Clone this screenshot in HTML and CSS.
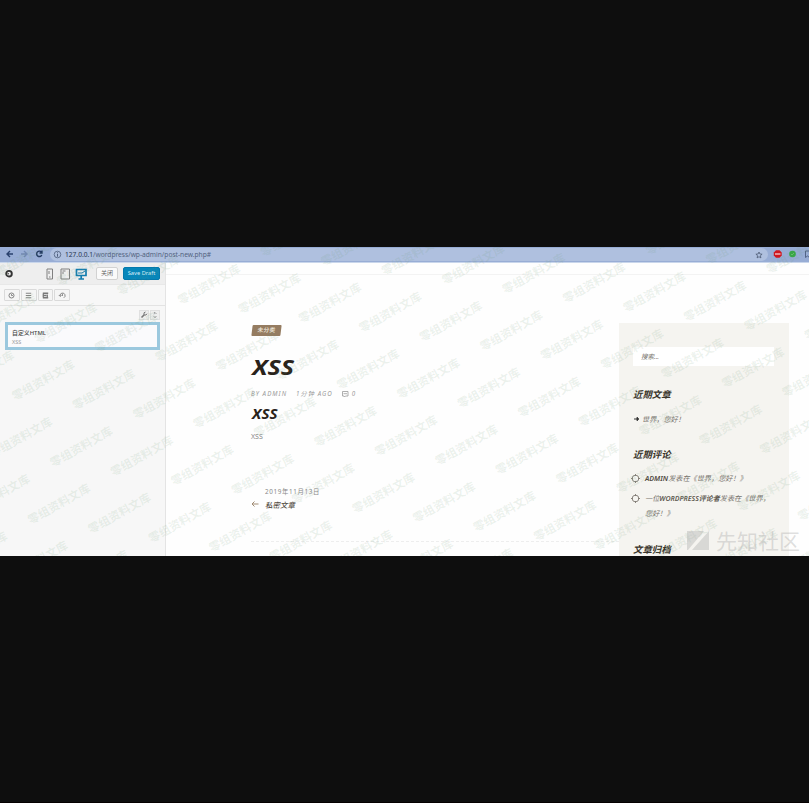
FILE: index.html
```html
<!DOCTYPE html>
<html lang="zh-CN">
<head>
<meta charset="utf-8">
<title>XSS</title>
<link rel="stylesheet" href="styles.css">
</head>
<body>
<div class="screen">
  <header class="browser">
    <svg class="nav" width="46" height="15" viewBox="0 0 46 15" fill="none" stroke-width="1.4">
      <path d="M13 7H7M10 4 7 7l3 3" stroke="#29406c"/>
      <path d="M21 7h6M24 4l3 3-3 3" stroke="#7188b3"/>
      <path d="M41.5 5.2A2.7 2.7 0 1 0 41.8 8M42 3.6V6h-2.5" stroke="#223961"/>
    </svg>
    <div class="address">
      <svg width="9" height="9" viewBox="0 0 9 9" fill="none" stroke="#4f5f7d"><circle cx="4.5" cy="4.5" r="3.3" stroke-width=".8"/><path d="M4.5 4v2.7M4.5 2.3v1"/></svg>
      <span class="url"><b>127.0.0.1</b>/wordpress/wp-admin/post-new.php#</span>
      <svg class="star" width="8" height="8" viewBox="0 0 8 8" fill="none" stroke="#4c5a74" stroke-width=".8"><path d="m4 1 .9 2 2.2.2-1.7 1.5.5 2.2L4 5.7 2.1 6.9l.5-2.2L.9 3.2 3.1 3z"/></svg>
    </div>
    <svg class="ext" width="41" height="15" viewBox="0 0 41 15">
      <path d="M8 3.2h3.5L13.7 5.400v3.200L11.500 10.800H8L5.800 8.600V5.400z" fill="#cf1820"/><path d="M7 7h5.500" stroke="#f6cdd0" stroke-width="1.300"/>
      <circle cx="24.500" cy="7" r="3.300" fill="#36a844"/><path d="m23 7 1 1 2-2" fill="none" stroke="#72c778" stroke-width=".8"/>
      <path d="M42 4h-4.500v6.500l2-1.500 2 1.500" fill="none" stroke="#526486"/>
    </svg>
  </header>
  <div class="workspace">
    <aside class="sidebar">
      <div class="actions">
        <svg width="9" height="9" viewBox="0 0 9 9"><circle cx="5" cy="4.700" r="2.800" fill="none" stroke="#333" stroke-width="1.900"/><path d="M5 2v2L3 4.700l2 .8" fill="#333"/></svg>
        <svg class="devices" width="44" height="14" viewBox="0 0 44 14" fill="none">
          <path d="M3 2h5.500v10H3zM5 10h1.500M5 4v3" stroke="#808080"/>
          <path d="M17 2h8.500v10H17zM18.500 4h3M19 5v2" stroke="#808080"/>
          <path d="M32.500 2.500h9.500v6h-9.500z" stroke="#127caf" stroke-width="1.700"/><path d="M34 6h4l3-2" stroke="#127caf"/><path d="M37.200 9v2.500M34.500 12h5.500" stroke="#127caf" stroke-width="1.700"/>
        </svg>
        <span class="btn close">关闭</span>
        <span class="btn save">Save Draft</span>
      </div>
      <div class="tools">
        <span class="tool"><svg viewBox="0 0 10 10"><circle cx="5" cy="5" r="2.800"/><path d="M5 3.500V5h1.500"/></svg></span>
        <span class="tool"><svg viewBox="0 0 10 10"><path d="M2 2.500h6M2 5h6M2 7.500h6"/></svg></span>
        <span class="tool"><svg viewBox="0 0 10 10"><path d="M2 2.500h6M2 5h4M2 7.500h6M7 4v4M2.500 3v4" stroke-width="1.400"/></svg></span>
        <span class="tool"><svg viewBox="0 0 10 10"><path d="M2.300 5.500a2.800 2.800 0 1 1 4.200 2M1 4.500l1.300 1.500L4 4.800M5 3.500V5.500"/></svg></span>
      </div>
      <div class="outline">
        <div class="mini-tools">
          <span class="mini"><svg viewBox="0 0 8 8"><path d="m1.500 6.500 3-3" stroke-width="1.600"/><path d="M4 3.500V1.800L5.500 1M4.500 4H6l1-1.300" /></svg></span>
          <span class="mini"><svg viewBox="0 0 8 8"><path d="m2.800 2.700 1.200-1.200 1.200 1.200M2.800 5.300 4 6.500l1.200-1.200"/></svg></span>
        </div>
        <div class="module"><b>自定义HTML</b><span>XSS</span></div>
      </div>
    </aside>
    <main class="preview">
      <div class="topline"></div>
      <div class="columns">
        <article class="post">
          <span class="category"><i>未分类</i></span>
          <h1>XSS</h1>
          <div class="meta"><span>BY ADMIN</span><span>1分钟 AGO</span><svg width="8" height="8" viewBox="0 0 8 8" fill="none" stroke="#999" stroke-width=".8"><path d="M1.500 1.500h5.500v4.500H4.500L3.500 7 3 6H1.500zM2.500 3.700h3.500"/></svg><span class="count">0</span></div>
          <h2>XSS</h2>
          <p>XSS</p>
          <div class="previous">
            <svg width="8" height="8" viewBox="0 0 8 8" fill="none" stroke="#a08b73"><path d="M7.500 4H1M3.500 1.500 1 4l2.500 2.500"/></svg>
            <div><time>2019年11月13日</time><strong>私密文章</strong></div>
          </div>
          <div class="divider"></div>
        </article>
        <aside class="widgets">
          <div class="search">搜索...</div>
          <h3>近期文章</h3>
          <div class="recent"><svg width="6" height="6" viewBox="0 0 6 6"><path d="M0 3h4M3 1.300 4.800 3 3 4.700z" fill="#333" stroke="#333"/></svg>世界，您好！</div>
          <h3 class="comments-title">近期评论</h3>
          <div class="comment"><svg viewBox="0 0 9 9"><circle cx="4.500" cy="4.500" r="3.300"/><path d="M4.500 0v2M4.500 7v2M0 4.500h2M7 4.500h2"/></svg><span><b>ADMIN</b>发表在《世界，您好！》</span></div>
          <div class="comment second"><svg viewBox="0 0 9 9"><circle cx="4.500" cy="4.500" r="3.300"/><path d="M4.500 0v2M4.500 7v2M0 4.500h2M7 4.500h2"/></svg><span>一位<b>WORDPRESS评论者</b>发表在《世界，<br>您好！》</span></div>
          <h3 class="archive-title">文章归档</h3>
        </aside>
      </div>
    </main>
  </div>
  <svg class="stamps" width="809" height="309" aria-hidden="true"></svg>
  <div class="community"><svg width="23" height="21" viewBox="0 0 23 21"><path d="M0 1h17L1 20H0zM22 1v19H5z" fill="currentColor"/></svg><span>先知社区</span></div>
</div>
<script src="stamps.js"></script>
</body>
</html>
```
FILE: styles.css
```css
* { box-sizing: border-box; }
body {
  margin: 0;
  height: 803px;
  padding-top: 247px;
  overflow: hidden;
  background: #0e0e0e;
  border-bottom: 1px solid #050000;
  font-family: "Noto Sans", "Noto Sans CJK SC", sans-serif;
}
.screen { position: relative; height: 309px; overflow: hidden; background: #fefefe; color: #333; }
.browser { display: flex; height: 16px; background: #98add5; border-bottom: 1px solid #c9d6eb; }
.nav { margin-right: 4px; flex: none; }
.address { display: flex; align-items: center; width: 718px; height: 13px; margin-top: 1px; padding: 0 5px 0 3px; border-radius: 7px; background: #afc0df; }
.url { margin-left: 3px; font-size: 6.63px; line-height: 12px; color: #52627e; white-space: nowrap; }
.url b { font-weight: 400; color: #27364f; }
.star { margin-left: auto; }
.ext { flex: none; }
.workspace { display: flex; height: 293px; }
.sidebar { width: 166px; flex: none; background: #f7f7f7; border-right: 1px solid #e4e4e4; }
.actions { display: flex; align-items: center; height: 22px; padding-left: 4px; background: #eee; border-bottom: 1px solid #e8e8e8; }
.devices { margin-left: 31px; }
.btn { display: block; height: 13px; border: 1px solid #d2d2d2; border-radius: 2px; text-align: center; line-height: 11px; }
.close { width: 22px; margin-left: 8px; background: #fafafa; font-size: 6px; color: #666; }
.save { width: 37px; margin-left: 5px; border-color: #0479ad; background: #0686ba; color: #d5edf8; font-size: 5.7px; }
.tools { display: flex; gap: 1px; height: 21px; padding: 4px 4px; border-bottom: 1px solid #e3e3e3; }
.tool { display: grid; place-items: center; width: 15.8px; height: 12px; background: #f5f5f5; border: 1px solid #dadada; border-radius: 1px; }
.tool svg { width: 9px; height: 9px; fill: none; stroke: #777; }
.outline { padding: 4px 5px; }
.mini-tools { display: flex; justify-content: flex-end; gap: 1px; height: 10px; margin-bottom: 2px; }
.mini { display: grid; place-items: center; width: 10px; height: 10px; background: #eee; border: 1px solid #e0e0e0; }
.mini svg { width: 8px; height: 8px; stroke: #777; fill: none; }
.module { display: flex; flex-direction: column; height: 28px; padding: 3px 4px; border: 3px solid #9bc8de; background: #fafafc; line-height: 10px; }
.module b { font-size: 5.9px; font-weight: 500; color: #444; }
.module span { font-size: 5.5px; line-height: 9px; color: #999; }
.preview { flex: 1; }
.topline { height: 12px; border-bottom: 1px solid #f3f3f3; }
.columns { display: flex; height: 281px; padding-top: 48px; }
.post { width: 368px; margin-left: 85px; padding-top: 2px; flex: none; }
.category { display: block; width: 29px; height: 11px; margin-left: .5px; border-radius: 1px; background: #957c61; color: #f0e8de; font-size: 5.8px; font-weight: 500; line-height: 11px; text-align: center; transform: skewX(-7deg); }
.category i { display: block; font-style: normal; letter-spacing: .2px; }
h1, h2, h3, p { margin: 0; }
h1, h2 { width: max-content; transform-origin: left; font-weight: 700; font-style: italic; color: #29231b; }
h1 { padding-left: 1px; margin-top: 16px; font-size: 22px; line-height: 28px; transform: scaleX(1.14); }
.meta { display: flex; align-items: center; height: 10px; margin-top: 9px; font-size: 6.2px; font-style: italic; letter-spacing: 1.05px; color: #999; }
.meta span { line-height: 10px; }
.meta span + span { margin-left: 9px; }
.meta svg { margin-left: 8px; }
.meta .count { margin-left: 3px; }
h2 { padding-left: 1px; margin-top: 5px; font-size: 14px; line-height: 20px; transform: scaleX(1.09); }
p { margin-top: 8px; font-size: 7px; line-height: 9px; color: #888; }
.previous { display: flex; align-items: center; gap: 6px; height: 27px; margin-top: 45px; }
.previous svg { margin-top: 8px; }
.previous div { display: flex; flex-direction: column; }
.previous time { font-size: 6.3px; line-height: 12px; color: #888; letter-spacing: .65px; }
.previous strong { font-size: 7.5px; line-height: 15px; font-weight: 500; font-style: italic; color: #554e45; }
.divider { margin-top: 28px; border-top: 1px dashed #eee; }
.widgets { width: 170px; height: 233px; padding: 24px 15px 0 14px; background: #f5f4f0; color: #77736d; font-style: italic; font-size: 7.15px; white-space: nowrap; overflow: hidden; }
.search { width: 141px; height: 19px; padding-left: 8px; background: #fff; font-size: 6.5px; line-height: 19px; }
h3 { margin-top: 21px; font-size: 9.4px; line-height: 16px; color: #39342b; font-weight: 700; }
.recent { display: flex; align-items: center; gap: 2px; height: 12px; margin: 10px 0 0 1px; }
.comments-title { margin-top: 22px; }
.comment { display: flex; align-items: flex-start; margin: 0 0 0 -2px; line-height: 15px; }
.comment svg { width: 9px; height: 9px; margin: 3px 5px 0 0; flex: none; stroke: #807b74; stroke-width: .9; fill: none; }
.comments-title + .comment { margin-top: 8px; margin-bottom: 5px; }
.comment b { font-weight: 600; color: #504a41; }
.comment.second b { font-size: 7px; color: #605a52; }
.archive-title { margin-top: 21px; }
.stamps { position: absolute; left: 0; top: 0; pointer-events: none; }
.stamps text { fill: #6b9872; fill-opacity: .13; font: 700 11.6px "Noto Sans CJK SC", sans-serif; text-anchor: middle; }
.community { position: absolute; right: 9px; bottom: 1px; display: flex; align-items: center; gap: 6px; color: rgba(165,165,165,.36); font-family: "Noto Sans CJK SC", sans-serif; font-size: 21px; line-height: 30px; }
```
FILE: stamps.js
```js
// Repeat the site stamp over a slanted lattice.
const layer = document.querySelector('.stamps');
for (let row = -9; row <= 6; row++) {
  for (let col = -4; col <= 17; col++) {
    const x = 43.2 + col * 60.45 - row * 22.4;
    const y = 133.2 + col * 9.25 + row * 57.2;
    if (x < -32 || x > 841 || y < -18 || y > 327) continue;
    const text = document.createElementNS('http://www.w3.org/2000/svg', 'text');
    text.setAttribute('transform', `translate(${x} ${y}) rotate(-29.3)`);
    text.setAttribute('y', '4.3');
    text.textContent = '零组资料文库';
    layer.appendChild(text);
  }
}
```
